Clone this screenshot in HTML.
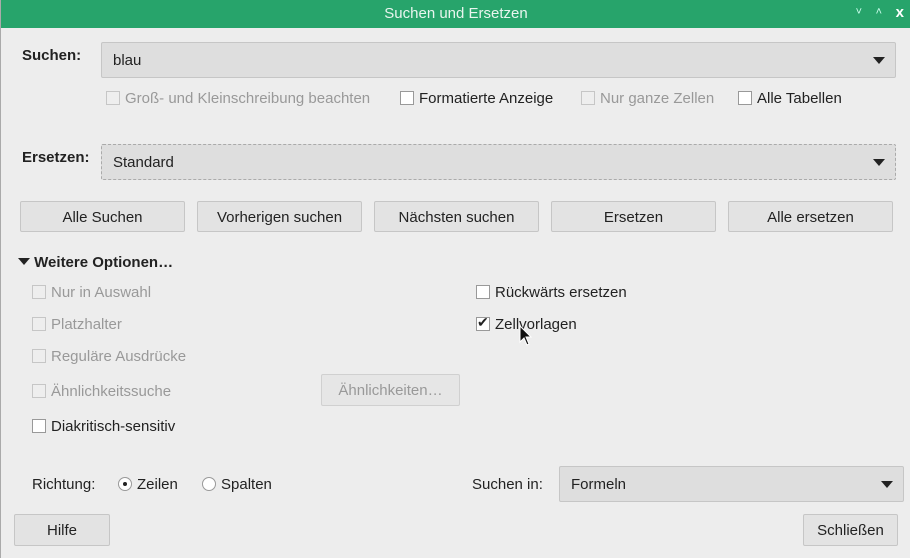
<!DOCTYPE html>
<html><head><style>
*{box-sizing:border-box;margin:0;padding:0}
body{width:910px;height:558px;background:#ededed;font-family:"Liberation Sans",sans-serif;font-size:15px;color:#222;position:relative;overflow:hidden;border-left:1px solid #aaa}
.a{position:absolute;white-space:nowrap}
.title{left:0;top:0;width:910px;height:28px;background:#27a46b;color:#e8f5ee;text-align:center;line-height:28px;font-size:15px}
.combo{background:#dedede;border:1px solid #c6c6c6;border-radius:2px}
.arrow{position:absolute;right:10px;top:50%;margin-top:-3px;border-left:6px solid transparent;border-right:6px solid transparent;border-top:7px solid #222}
.btn{background:#e3e3e3;border:1px solid #c6c6c6;border-radius:2px;text-align:center;line-height:31px;height:31px}
.cb{width:14px;height:14px;border:1px solid #999;background:#fff;display:inline-block;vertical-align:-2px;margin-right:5px}
.dis{color:#999}.dis .cb{border-color:#c6c6c6;background:#eee}
b{font-weight:bold}
</style></head><body>
<div class="a title">Suchen und Ersetzen</div>
<div class="a" style="right:48px;top:6px;font-size:11px;color:#cfe">˅</div>
<div class="a" style="right:28px;top:6px;font-size:11px;color:#cfe">˄</div>
<div class="a" style="right:6px;top:4px;font-size:15px;color:#fff;font-weight:bold">x</div>
<div class="a" style="left:21px;top:47px"><b>Suchen:</b></div>
<div class="a combo" style="left:100px;top:42px;width:795px;height:36px"><span class="a" style="left:11px;top:9px">blau</span><span class="arrow"></span></div>
<div class="a dis" style="left:105px;top:90px"><span class="cb"></span>Groß- und Kleinschreibung beachten</div>
<div class="a" style="left:399px;top:90px"><span class="cb"></span>Formatierte Anzeige</div>
<div class="a dis" style="left:580px;top:90px"><span class="cb"></span>Nur ganze Zellen</div>
<div class="a" style="left:737px;top:90px"><span class="cb"></span>Alle Tabellen</div>
<div class="a" style="left:21px;top:149px"><b>Ersetzen:</b></div>
<div class="a combo" style="left:100px;top:144px;width:795px;height:36px;border:1px dashed #aaa"><span class="a" style="left:11px;top:9px">Standard</span><span class="arrow"></span></div>
<div class="a btn" style="left:19px;top:201px;width:165px">Alle Suchen</div>
<div class="a btn" style="left:196px;top:201px;width:165px">Vorherigen suchen</div>
<div class="a btn" style="left:373px;top:201px;width:165px">Nächsten suchen</div>
<div class="a btn" style="left:550px;top:201px;width:165px">Ersetzen</div>
<div class="a btn" style="left:727px;top:201px;width:165px">Alle ersetzen</div>
<div class="a" style="left:17px;top:254px"><span style="display:inline-block;border-left:6px solid transparent;border-right:6px solid transparent;border-top:7px solid #222;vertical-align:2px"></span><b> Weitere Optionen…</b></div>
<div class="a dis" style="left:31px;top:284px"><span class="cb"></span>Nur in Auswahl</div>
<div class="a dis" style="left:31px;top:316px"><span class="cb"></span>Platzhalter</div>
<div class="a dis" style="left:31px;top:348px"><span class="cb"></span>Reguläre Ausdrücke</div>
<div class="a dis" style="left:31px;top:383px"><span class="cb"></span>Ähnlichkeitssuche</div>
<div class="a" style="left:31px;top:418px"><span class="cb"></span>Diakritisch-sensitiv</div>
<div class="a btn dis" style="left:320px;top:374px;width:139px;height:32px;line-height:31px;background:#e6e6e6;border-color:#d0d0d0">Ähnlichkeiten…</div>
<div class="a" style="left:475px;top:284px"><span class="cb"></span>Rückwärts ersetzen</div>
<div class="a" style="left:475px;top:316px"><span class="cb" style="position:relative"><span style="position:absolute;left:0px;top:-4px;font-size:14px">✔</span></span>Zellvorlagen</div>
<svg class="a" style="left:518px;top:325px" width="14" height="22" viewBox="0 0 14 22"><path d="M1 1 L1 17 L5 13 L8 20 L10 19 L7 12 L12 12 Z" fill="#111" stroke="#fff" stroke-width="1"/></svg>
<div class="a" style="left:31px;top:476px">Richtung:</div>
<div class="a" style="left:117px;top:476px"><span style="display:inline-block;width:14px;height:14px;border:1px solid #999;border-radius:50%;background:#fff;vertical-align:-2px;position:relative;margin-right:5px"><span style="position:absolute;left:4px;top:4px;width:4px;height:4px;border-radius:50%;background:#222"></span></span>Zeilen</div>
<div class="a" style="left:201px;top:476px"><span style="display:inline-block;width:14px;height:14px;border:1px solid #999;border-radius:50%;background:#fff;vertical-align:-2px;margin-right:5px"></span>Spalten</div>
<div class="a" style="left:471px;top:476px">Suchen in:</div>
<div class="a combo" style="left:558px;top:466px;width:345px;height:36px"><span class="a" style="left:11px;top:9px">Formeln</span><span class="arrow"></span></div>
<div class="a btn" style="left:13px;top:514px;width:96px;height:32px;line-height:32px">Hilfe</div>
<div class="a btn" style="left:802px;top:514px;width:95px;height:32px;line-height:32px">Schließen</div>
</body></html>
